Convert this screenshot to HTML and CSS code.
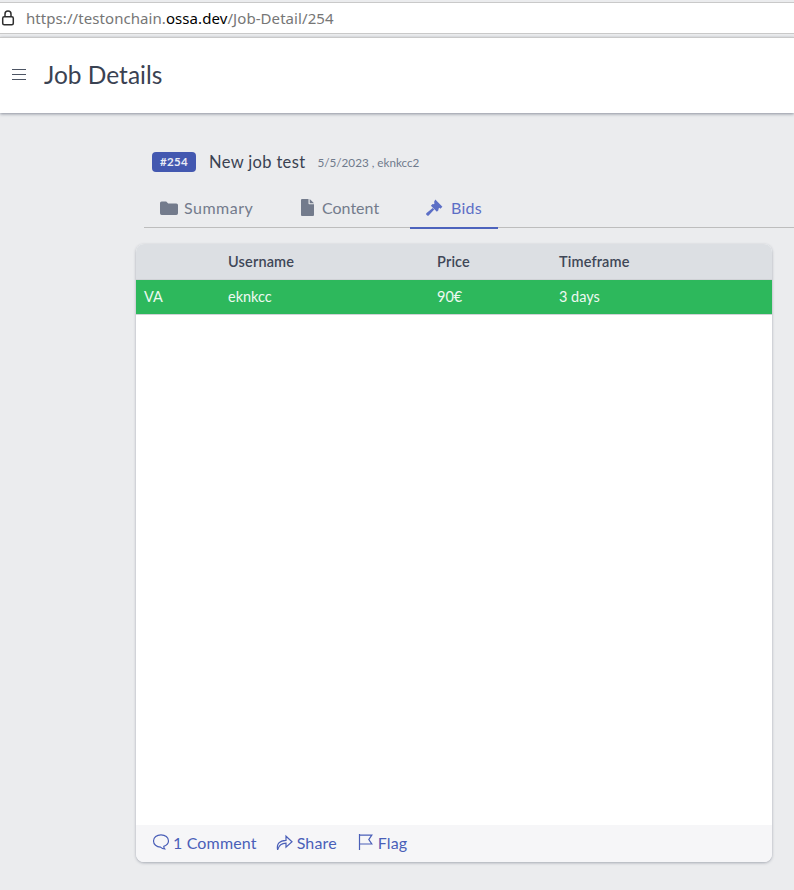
FILE: index.html
```html
<!DOCTYPE html>
<html lang="en">
<head>
<meta charset="utf-8">
<title>Job Details</title>
<link rel="stylesheet" href="styles.css">
</head>
<body>
<div class="urlbar">
  <svg class="lock" width="16" height="18" viewBox="0 0 16 18" fill="none" stroke="#2e2e2e" stroke-width="1.5"><rect x="2.700" y="7.700" width="10.600" height="8" rx="1.500"/><path d="M5 7.500V5a3 3 0 0 1 6 0v2.500"/></svg>
  <span class="url">https://testonchain.<b class="host">ossa.dev</b>/Job-Detail/254</span>
</div>
<header class="topbar">
  <div class="burger"><i></i><i></i><i></i></div>
  <h1 class="title">Job Details</h1>
</header>
<main class="content">
  <div class="jobhead">
    <span class="badge">#254</span>
    <span class="jobname">New job test</span>
    <span class="jobmeta">5/5/2023 , eknkcc2</span>
  </div>
  <nav class="tabs">
    <a class="tab tab-summary">
      <svg width="18" height="14" viewBox="0 0 18 14" fill="#737b8c"><path d="M0 2a1.600 1.600 0 0 1 1.600-1.600h4.600l2 2h8.100A1.700 1.700 0 0 1 18 4.100v8.200A1.700 1.700 0 0 1 16.300 14H1.700A1.700 1.700 0 0 1 0 12.300z"/></svg>
      Summary</a>
    <a class="tab tab-content">
      <svg width="13" height="17" viewBox="0 0 13 17" fill="#737b8c"><path d="M0 1a1 1 0 0 1 1-1h6.500v4.500a.8.8 0 0 0 .8.8H13V16a1 1 0 0 1-1 1H1a1 1 0 0 1-1-1z"/><path d="M8.700 0 13 4.200H8.700z"/></svg>
      Content</a>
    <a class="tab tab-bids active">
      <svg width="17" height="17" viewBox="0 0 17 17" fill="#5c6fc6"><path d="M9.300.6 16.400 7.700l-2 2-.9-.9-1.200 1.200.3 1-1.700 1.700L4.900 6.700l1.700-1.700 1 .3 1.200-1.200-.9-.9z"/><path d="M6.700 9.100 8.200 10.600 2.900 16.300a1.300 1.300 0 0 1-1.900 0l-.4-.4a1.300 1.300 0 0 1 0-1.900z"/></svg>
      Bids</a>
  </nav>
  <section class="card">
    <div class="row row-head">
      <span class="c1"></span><span class="c2">Username</span><span class="c3">Price</span><span class="c4">Timeframe</span>
    </div>
    <div class="row row-bid">
      <span class="c1">VA</span><span class="c2">eknkcc</span><span class="c3">90€</span><span class="c4">3 days</span>
    </div>
    <div class="spacer"></div>
    <footer class="actions">
      <a class="action action-comment">
        <svg width="18" height="18" viewBox="0 0 18 18" fill="none" stroke="#4a5fb8" stroke-width="1.200"><path d="M9 1.800c-4.200 0-7.500 2.700-7.500 6.200 0 3.300 3 6 7 6.200.9.900 2.600 1.800 4.200 1.800-.6-.7-.9-1.600-.9-2.600 2.700-1.100 4.700-3 4.700-5.400 0-3.500-3.300-6.200-7.500-6.200z"/></svg>
        1 Comment</a>
      <a class="action action-share">
        <svg width="17" height="18" viewBox="0 0 17 18" fill="none" stroke="#4a5fb8" stroke-width="1.200"><path d="M1.600 16.800C.4 11 3.500 7.500 10 7.300V3.200l6 5.600-6 5.400v-4c-4.200 0-7 1.800-8.400 6.600z"/></svg>
        Share</a>
      <a class="action action-flag">
        <svg width="15" height="18" viewBox="0 0 15 18" fill="none" stroke="#4a5fb8" stroke-width="1.200"><path d="M1.500 1v16M1.500 2.200h12.300l-3 4.400 3 4.400H1.500"/></svg>
        Flag</a>
    </footer>
  </section>
</main>
</body>
</html>
```
FILE: styles.css
```css
* { box-sizing: border-box; }
html, body { margin: 0; padding: 0; }
body {
  width: 794px;
  height: 890px;
  overflow: hidden;
  background: #ebecee;
  font-family: "Lato", "Open Sans", sans-serif;
  color: #3a4252;
}
.urlbar {
  height: 32px;
  margin-top: 2px;
  background: #fff;
  border-top: 1px solid #c9c9c9;
  border-bottom: 1px solid #c9c9c9;
  display: flex;
  align-items: center;
  gap: 10px;
}
.lock { flex: none; margin-bottom: 1px; }
.url {
  font-family: "Noto Sans", sans-serif;
  font-size: 15px;
  letter-spacing: .07px;
  color: #767676;
}
.host { font-weight: 400; color: #000; }
.topbar {
  height: 76px;
  margin-top: 3px;
  background: #fff;
  border-top: 1px solid #c9c9c9;
  box-shadow: 0 1px 3px rgba(60, 70, 90, .55);
  display: flex;
  align-items: center;
  padding: 0 0 3px 12px;
  gap: 18px;
}
.burger { width: 14px; display: flex; flex-direction: column; gap: 4px; }
.burger i { display: block; height: 1px; background: #4d5564; }
.title { margin: 0; font-size: 24.500px; font-weight: 400; color: #3a4252; }
.content { padding: 36px 0 0 136px; }
.jobhead {
  display: flex;
  align-items: center;
  height: 26px;
  padding-left: 16px;
}
.badge {
  width: 44px;
  height: 20px;
  background: #4358b0;
  color: #e9ecf6;
  border-radius: 4px;
  font-size: 11.500px;
  font-weight: 700;
  text-align: center;
  line-height: 20px;
  letter-spacing: .3px;
}
.jobname { margin-left: 13px; font-size: 16.500px; color: #3a4252; letter-spacing: .35px; }
.jobmeta { margin-left: 12px; font-size: 11.700px; color: #6f7a8c; }
.tabs {
  display: flex;
  height: 40px;
  margin: 13px 0 0 8px;
  border-bottom: 1px solid #bdbdbd;
}
.tab {
  display: flex;
  align-items: center;
  gap: 7px;
  height: 41px;
  padding-bottom: 2px;
  font-size: 16px;
  color: #737b8c;
}
.tab-summary { margin-left: 16px; width: 141px; gap: 6px; letter-spacing: .5px; }
.tab-content { width: 110px; gap: 8px; }
.tab-bids {
  width: 88px;
  padding: 0 0 0 16px;
  margin-left: -1px;
  gap: 8px;
  letter-spacing: .25px;
  border-bottom: 2px solid #4d63bd;
  color: #5c6fc6;
}
.card {
  width: 636px;
  height: 618px;
  margin-top: 16px;
  background: #fff;
  border-radius: 8px;
  overflow: hidden;
  box-shadow: 0 1px 3px rgba(60, 70, 90, .4);
  display: flex;
  flex-direction: column;
}
.row { display: flex; align-items: center; font-size: 14.500px; flex: none; padding-bottom: 1px; }
.row-head {
  height: 36px;
  background: #dcdfe3;
  font-weight: 600;
  letter-spacing: .15px;
  color: #3f4757;
  border-bottom: 1px solid #d0d2d6;
}
.row-bid {
  height: 35px;
  background: #2db85c;
  color: #eef9f1;
  border-bottom: 1px solid #d0d2d6;
}
.c1 { width: 92px; padding-left: 8px; }
.c2 { width: 209px; }
.c3 { width: 122px; }
.c4 { flex: 1; }
.spacer { flex: 1; }
.actions {
  height: 37px;
  flex: none;
  background: #f6f6f8;
  display: flex;
  align-items: center;
  padding: 0 0 3px 16px;
  font-size: 16px;
  letter-spacing: .15px;
  color: #4a5fb8;
}
.action { display: flex; align-items: center; gap: 3px; }
.action-comment { margin-right: 19px; }
.action-share { gap: 4px; margin-right: 21px; }
.action-flag { gap: 5px; }
```
